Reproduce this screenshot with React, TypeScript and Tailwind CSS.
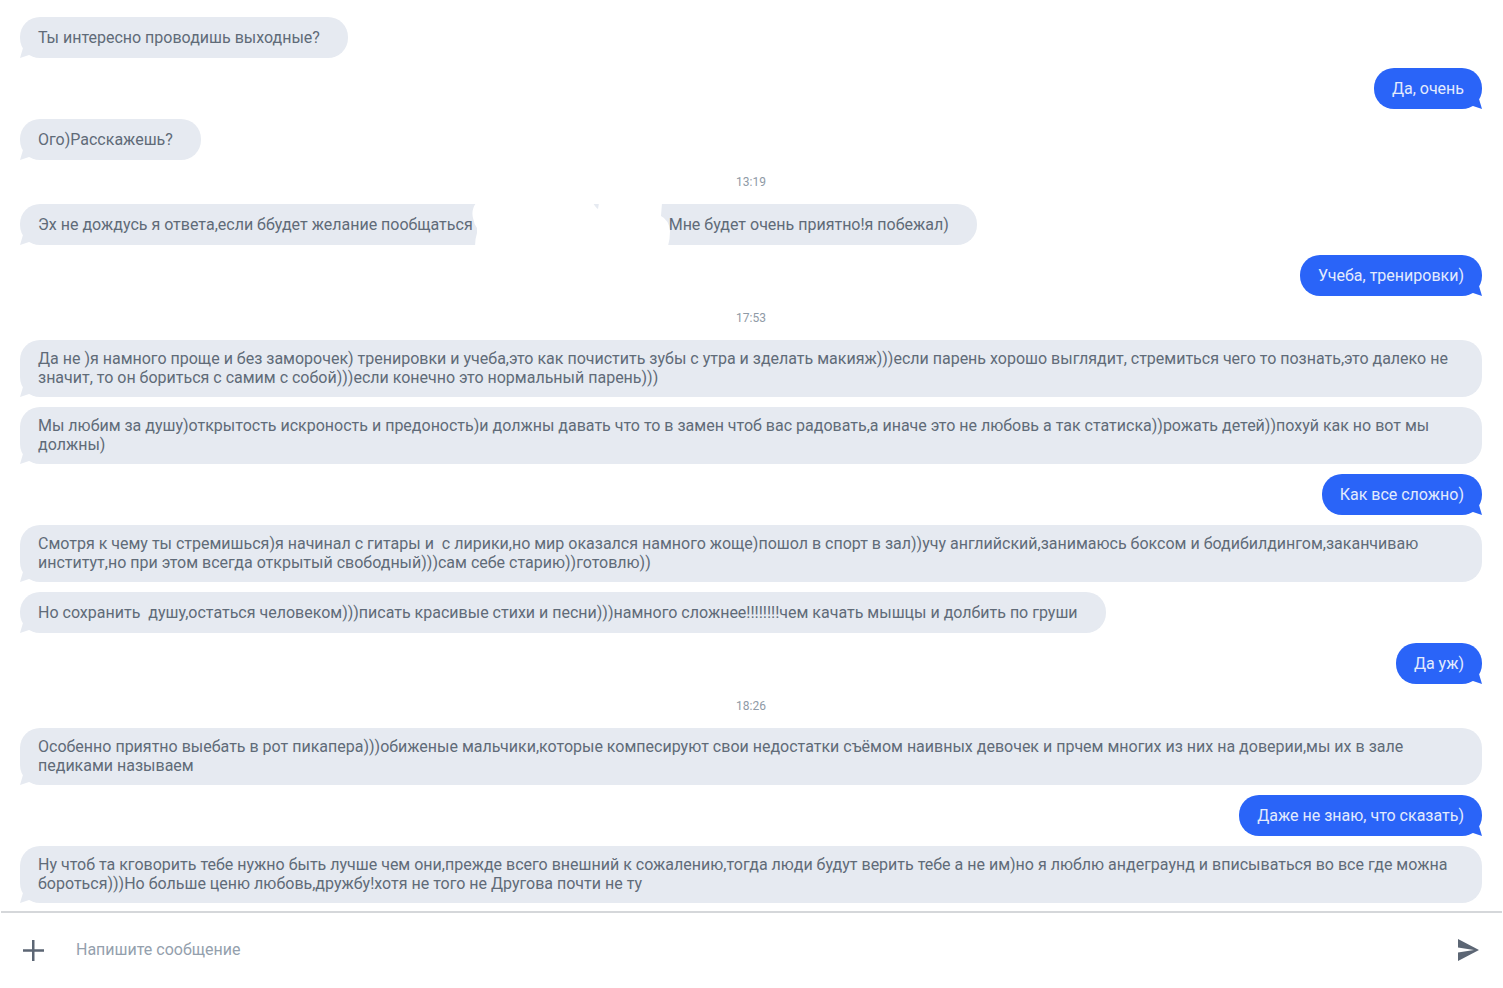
import { clsx } from "clsx";

type Entry =
  | { kind: "time"; text: string }
  | { kind: "in" | "out"; text: string; rest?: string };

const ENTRIES: Entry[] = [
  { kind: "in", text: "Ты интересно проводишь выходные?" },
  { kind: "out", text: "Да, очень" },
  { kind: "in", text: "Ого)Расскажешь?" },
  { kind: "time", text: "13:19" },
  {
    kind: "in",
    text: "Эх не дождусь я ответа,если ббудет желание пообщаться",
    rest: "Мне будет очень приятно!я побежал)",
  },
  { kind: "out", text: "Учеба, тренировки)" },
  { kind: "time", text: "17:53" },
  {
    kind: "in",
    text: "Да не )я намного проще и без заморочек) тренировки и учеба,это как почистить зубы с утра и зделать макияж)))если парень хорошо выглядит, стремиться чего то познать,это далеко не значит, то он бориться с самим с собой)))если конечно это нормальный парень)))",
  },
  {
    kind: "in",
    text: "Мы любим за душу)открытость искроность и предоность)и должны давать что то в замен чтоб вас радовать,а иначе это не любовь а так статиска))рожать детей))похуй как но вот мы должны)",
  },
  { kind: "out", text: "Как все сложно)" },
  {
    kind: "in",
    text: "Смотря к чему ты стремишься)я начинал с гитары и  с лирики,но мир оказался намного жоще)пошол в спорт в зал))учу английский,занимаюсь боксом и бодибилдингом,заканчиваю институт,но при этом всегда открытый свободный)))сам себе старию))готовлю))",
  },
  {
    kind: "in",
    text: "Но сохранить  душу,остаться человеком)))писать красивые стихи и песни)))намного сложнее!!!!!!!!чем качать мышцы и долбить по груши",
  },
  { kind: "out", text: "Да уж)" },
  { kind: "time", text: "18:26" },
  {
    kind: "in",
    text: "Особенно приятно выебать в рот пикапера)))обиженые мальчики,которые компесируют свои недостатки съёмом наивных девочек и прчем многих из них на доверии,мы их в зале педиками называем",
  },
  { kind: "out", text: "Даже не знаю, что сказать)" },
  {
    kind: "in",
    text: "Ну чтоб та кговорить тебе нужно быть лучше чем они,прежде всего внешний к сожалению,тогда люди будут верить тебе а не им)но я люблю андеграунд и вписываться во все где можна бороться)))Но больше ценю любовь,дружбу!хотя не того не Другова почти не ту",
  },
];

// Small pointed corner at the bottom of a bubble
function Tail({ side }: { side: "left" | "right" }) {
  return (
    <svg
      aria-hidden="true"
      width="12"
      height="12"
      viewBox="0 0 12 12"
      fill="currentColor"
      className={clsx(
        "absolute bottom-0",
        side === "left" ? "left-0 text-[#e6eaf1]" : "right-0 -scale-x-100 text-[#2a64f8]",
      )}
    >
      <path d="M0 12 L3 2 L12 5 L9 9 Z" />
    </svg>
  );
}

// Wiped-out stretch in the middle of a message
function Erased() {
  return (
    <span className="relative inline-block h-[19px] w-[196px] align-top">
      <svg
        aria-hidden="true"
        width="200"
        height="43"
        viewBox="0 0 200 43"
        className="absolute -top-3 -left-px fill-white"
      >
        <path d="M4 0 Q-1 7 1 15 Q2 21 5 25 L5 30 Q3 36 3 43 L196 43 Q198 36 198 28 Q197 17 189 13 L190 0 L127 0 L126 6 Q124 5 121 0 Z" />
      </svg>
    </span>
  );
}

function Bubble({ entry }: { entry: Exclude<Entry, { kind: "time" }> }) {
  const incoming = entry.kind === "in";

  return (
    <li
      className={clsx(
        "relative flex min-h-[41px] items-center rounded-[20px] pt-[9px] pb-[10px]",
        incoming
          ? "self-start bg-[#e6eaf1] pr-7 pl-[18px] text-[#606b78]"
          : "self-end bg-[#2a64f8] px-[18px] text-[#e3ebfd]",
      )}
    >
      <Tail side={incoming ? "left" : "right"} />
      <p className="whitespace-pre-wrap">
        {entry.text}
        {entry.rest && (
          <>
            <Erased />
            {entry.rest}
          </>
        )}
      </p>
    </li>
  );
}

export default function App() {
  return (
    <div className="flex min-h-screen flex-col bg-white font-[Roboto,sans-serif] text-[16px] leading-[19px]">
      <ul className="flex flex-col gap-[10px] pt-[17px] pr-[21px] pb-2 pl-5">
        {ENTRIES.map((entry, index) =>
          entry.kind === "time" ? (
            <li
              key={index}
              className="flex h-6 items-center justify-center text-[12px] text-[#8f9aa6]"
            >
              {entry.text}
            </li>
          ) : (
            <Bubble key={index} entry={entry} />
          ),
        )}
      </ul>

      <form
        className="mx-px flex flex-1 items-center border-t-2 border-[#d5d7da] pr-[21px] pb-0.5 pl-5"
        onSubmit={(event) => event.preventDefault()}
      >
        <button type="button" aria-label="Прикрепить" className="text-[#5c6674]">
          <svg width="24" height="24" viewBox="0 0 24 24" fill="currentColor">
            <path d="M11 2h2.5v9.2H23v2.5h-9.5V23H11v-9.3H2v-2.5h9z" />
          </svg>
        </button>
        <input
          type="text"
          aria-label="Сообщение"
          placeholder="Напишите сообщение"
          className="ml-[31px] min-w-0 flex-1 text-[#606b78] outline-none placeholder:text-[#94a0ad]"
        />
        <button type="submit" aria-label="Отправить" className="text-[#5c6674]">
          <svg width="24" height="24" viewBox="0 0 24 24" fill="currentColor">
            <path d="M1 1 L22 12 L1 23 V14.500 L17 12 L1 9.500 Z" />
          </svg>
        </button>
      </form>
    </div>
  );
}
